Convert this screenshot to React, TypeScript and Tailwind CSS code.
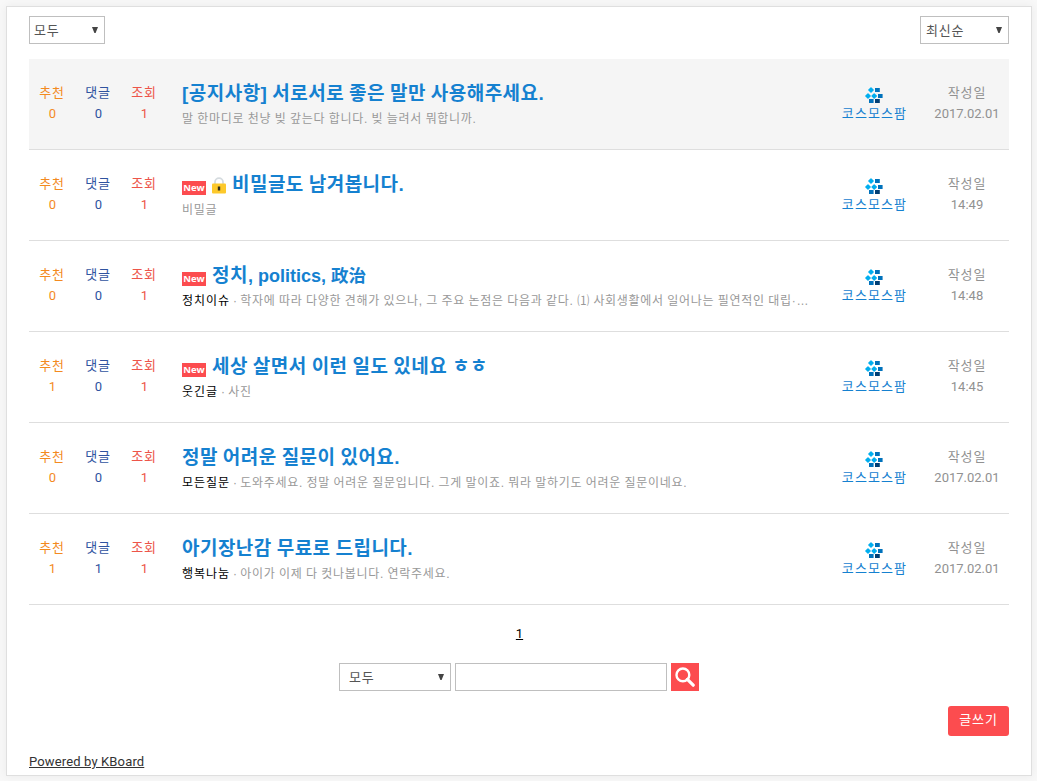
import React from "react";

type Post = {
  votes: number;
  comments: number;
  title: React.ReactNode;
  category?: string;
  excerpt: string;
  date: string;
  isNew?: boolean;
  secret?: boolean;
  notice?: boolean;
};

const posts: Post[] = [
  { votes: 0, comments: 0, title: "[공지사항] 서로서로 좋은 말만 사용해주세요.", excerpt: "말 한마디로 천냥 빚 갚는다 합니다. 빚 늘려서 뭐합니까.", date: "2017.02.01", notice: true },
  { votes: 0, comments: 0, title: "비밀글도 남겨봅니다.", excerpt: "비밀글", date: "14:49", isNew: true, secret: true },
  {
    votes: 0,
    comments: 0,
    title: (
      <>
        정치<span className="text-[18px] tracking-normal [word-spacing:0]">, politics, </span>
        <span className="text-[17.5px] tracking-normal">政治</span>
      </>
    ),
    category: "정치이슈",
    excerpt: "학자에 따라 다양한 견해가 있으나, 그 주요 논점은 다음과 같다. ⑴ 사회생활에서 일어나는 필연적인 대립·…",
    date: "14:48",
    isNew: true,
  },
  { votes: 1, comments: 0, title: "세상 살면서 이런 일도 있네요 ㅎㅎ", category: "웃긴글", excerpt: "사진", date: "14:45", isNew: true },
  { votes: 0, comments: 0, title: "정말 어려운 질문이 있어요.", category: "모든질문", excerpt: "도와주세요. 정말 어려운 질문입니다. 그게 말이죠. 뭐라 말하기도 어려운 질문이네요.", date: "2017.02.01" },
  { votes: 1, comments: 1, title: "아기장난감 무료로 드립니다.", category: "행복나눔", excerpt: "아이가 이제 다 컷나봅니다. 연락주세요.", date: "2017.02.01" },
];

function Logo() {
  return (
    <svg width="18" height="17" viewBox="0 0 18 17" className="block">
      <g fill="#00aeef" stroke="#00aeef" strokeWidth="1.4" strokeLinejoin="round">
        <path d="M6 .9L8.1 3 6 5.1 3.9 3z" />
        <path d="M3 6.9L5.1 9 3 11.1.9 9z" />
        <path d="M9.2 6.9L11.3 9 9.2 11.1 7.1 9z" />
      </g>
      <path d="M10 1h4.8v4H10zM13 7h4.6v4H13zM4 12h4.6v4H4z" fill="#0072bc" />
      <path d="M10 12h4.8v4H10z" fill="#003f75" />
    </svg>
  );
}

function Lock() {
  return (
    <svg width="14" height="17" viewBox="0 0 14 17" className="block">
      <path d="M3 8V5.2a4 4 0 0 1 8 0V8" fill="none" stroke="#d5dbdf" strokeWidth="1.8" />
      <rect x="0" y="6.5" width="14" height="10" rx="1" fill="#fdc92b" />
      <path d="M5.8 9.5h2.4v4H5.8z" fill="#33301c" />
    </svg>
  );
}

function Select({ label, className }: { label: string; className: string }) {
  return (
    <div className={`flex h-7 items-center justify-between border border-[#bfbfbf] bg-white text-[13px] text-[#555] ${className}`}>
      <span className="pt-0.5 tracking-[0.8px]">{label}</span>
      <svg width="6" height="6" viewBox="0 0 6 6">
        <path d="M0 0h6L3.6 6H2.4z" fill="#444" />
      </svg>
    </div>
  );
}

function Stat({ label, value, className }: { label: string; value: number; className: string }) {
  return (
    <div className={`w-[46px] text-center leading-[21px] ${className}`}>
      <div className="tracking-[0.9px]">{label}</div>
      <div className="pl-px font-[Roboto]">{value}</div>
    </div>
  );
}

function Row({ post }: { post: Post }) {
  return (
    <div className={`flex h-[91px] border-b border-[#dedede] text-[13px] ${post.notice ? "bg-[#f5f5f5]" : ""}`}>
      <div className="flex w-[153px] pt-[23px]">
        <Stat label="추천" value={post.votes} className="text-[#f38a1f]" />
        <Stat label="댓글" value={post.comments} className="text-[#2f539f]" />
        <Stat label="조회" value={1} className="text-[#ed5549]" />
      </div>
      <div className="min-w-0 flex-1 pt-[22px] whitespace-nowrap">
        <div className="flex h-[26px] items-start">
          {post.isNew && (
            <span className="mt-[9px] mr-[6px] h-[14px] w-6 bg-[#fc4c4f] text-center font-['Open_Sans'] text-[9.5px] leading-[14px] font-bold text-white">New</span>
          )}
          {post.secret && (
            <span className="mt-[5px] mr-[6px]">
              <Lock />
            </span>
          )}
          <span className="text-[19px] leading-[26px] font-bold tracking-[0.47px] whitespace-pre text-[#1581d0] [word-spacing:-0.8px]">{post.title}</span>
        </div>
        <div className="text-[12px] leading-6 tracking-[0.7px] text-[#999] [word-spacing:-0.5px]">
          {post.category && <span className="tracking-[0.95px] text-black">{post.category}</span>}
          {post.category && <span className="tracking-[0.2px]"> · </span>}
          {post.excerpt}
        </div>
      </div>
      <div className="flex w-[84px] flex-col items-center pt-[27.5px]">
        <Logo />
        <span className="pt-[2px] pl-px text-[13px] leading-[16px] tracking-[1.1px] text-[#1581d0]">코스모스팜</span>
      </div>
      <div className="w-[93px] pt-[23px] pl-[9px] text-center leading-[21px] text-[#919191]">
        <div className="tracking-[0.8px]">작성일</div>
        <div className="font-[Roboto]">{post.date}</div>
      </div>
    </div>
  );
}

export default function App() {
  return (
    <div className="h-[781px] w-[1037px] bg-[#f8f8f8] px-[6px] pt-[6px] font-['Liberation_Sans','Noto_Sans_CJK_KR',sans-serif]">
      <div className="flex h-[770px] w-[1026px] flex-col border border-[#dfdfdf] bg-white px-[22px] pt-[9px] shadow-[0_0_10px_rgba(0,0,0,0.06)]">
        <div className="mb-[15px] flex justify-between">
          <Select label="모두" className="w-[76px] pr-[6px] pl-[4px]" />
          <Select label="최신순" className="w-[89px] pr-[6px] pl-[5px]" />
        </div>
        {posts.map((p, i) => (
          <Row key={i} post={p} />
        ))}
        <div className="mt-[18px] pl-px text-center font-[Roboto] text-[13px] leading-[21px] text-black underline">1</div>
        <div className="mt-[19px] flex justify-center gap-1">
          <Select label="모두" className="w-[112px] pr-[6px] pl-[9px]" />
          <input className="h-7 w-[212px] border border-[#bfbfbf] bg-white" />
          <button className="flex h-7 w-7 items-center justify-center bg-[#fc4c4f]">
            <svg width="20" height="20" viewBox="0 0 20 20" fill="none" stroke="#fff">
              <circle cx="7.9" cy="7.9" r="6.4" strokeWidth="2.4" />
              <path d="M12.4 12.4l5.8 5.8" strokeWidth="3.2" strokeLinecap="round" />
            </svg>
          </button>
        </div>
        <div className="mt-[15px] flex justify-end">
          <button className="h-[30px] w-[61px] rounded-[3px] bg-[#fc4c4f] pb-[2px] text-[13px] tracking-[0.8px] text-white">글쓰기</button>
        </div>
        <div className="mt-[15px] font-[Roboto] text-[13px] leading-[21px] tracking-[0.14px] text-[#333] underline">Powered by KBoard</div>
      </div>
    </div>
  );
}
